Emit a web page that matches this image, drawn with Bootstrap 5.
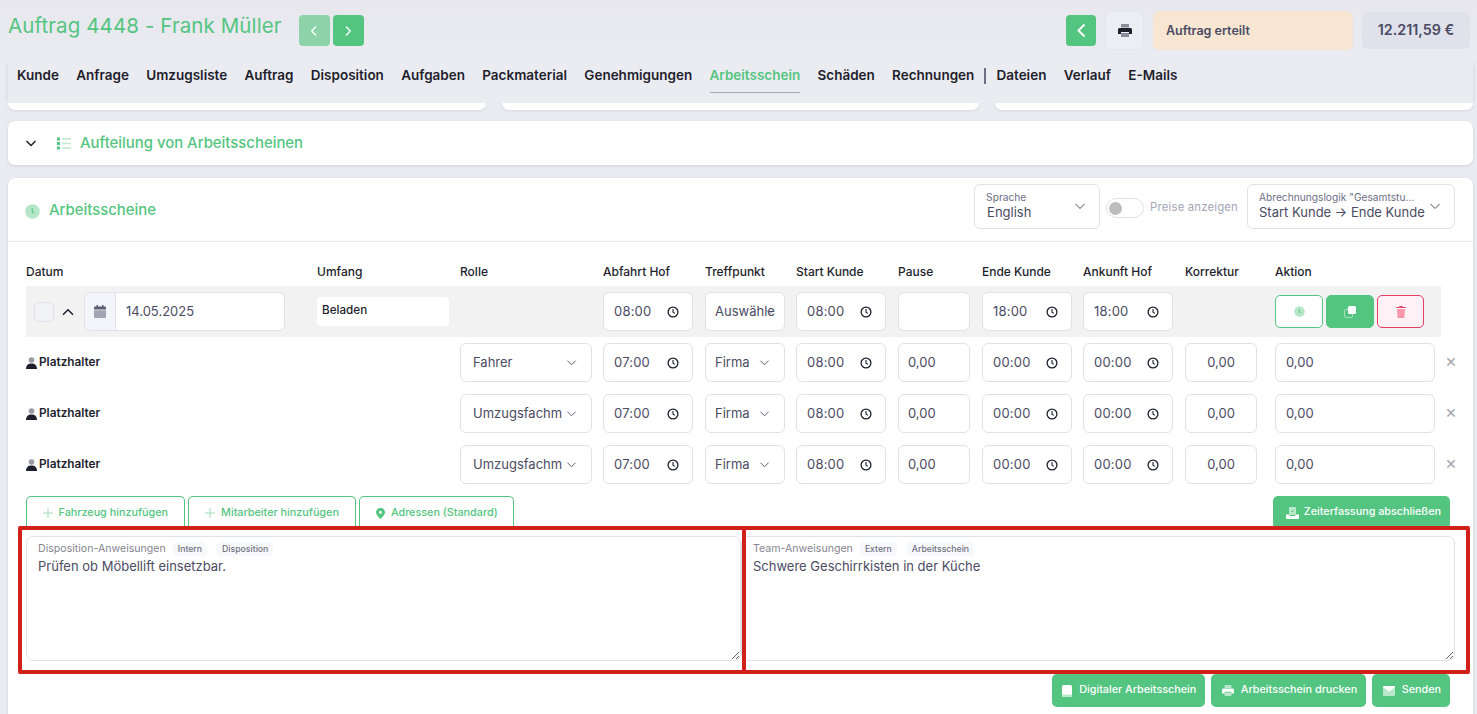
<!DOCTYPE html>
<html lang="de">
<head>
<meta charset="utf-8">
<title>Auftrag 4448</title>
<link href="https://cdn.jsdelivr.net/npm/bootstrap@5.3.0/dist/css/bootstrap.min.css" rel="stylesheet">
<style>
:root{--g:#54c581;--ink:#1e1e2d;--txt:#4b4b63;--line:#e1e1ec;}
html,body{height:714px;overflow:hidden}
body{background:#ebecf1;font-family:Inter,"Liberation Sans",sans-serif;color:var(--ink);font-size:13px}
.tm-top{height:60px;padding:11px 7px 0 8px;background:linear-gradient(#e7e7ed,#ebecf1)}
.tm-title{font-size:20.5px;font-weight:400;color:var(--g);margin:-1px 0 0;line-height:32px;letter-spacing:.1px}
.tm-pager{display:flex;gap:3px;margin:4px 0 0 17px}
.tm-sq{width:31px;height:31px;padding:0;border-radius:4px;border:0;background:var(--g);display:flex;align-items:center;justify-content:center}
.tm-sq:disabled{background:#8dd3a9;opacity:1}
.tm-sq:hover{background:var(--g)}
.tm-back{width:30px;margin:4px 9px 0 0}
.tm-print{width:39px;height:39px;padding:0;border:1px solid #e3e6ec;background:#ebeff3;border-radius:6px;display:flex;align-items:center;justify-content:center}
.tm-status{width:200px;height:39px;margin-left:9px;background:#f8e6d2;border:1px solid #f3e3d3;border-radius:6px;font-weight:600;font-size:12.5px;color:#4b4b63;display:flex;align-items:center;padding:2px 0 0 12px}
.tm-sum{width:108px;height:37px;margin:1px 0 0 9px;background:#dfe1eb;border-radius:6px;font-weight:600;font-size:14.3px;color:#4b4b63;display:flex;align-items:center;justify-content:center;padding-bottom:2px}
.tm-navbar{height:42px;margin:1px 4px 0 8px;padding:0 0 0 9px;background:#ebecf1;position:relative;box-shadow:-3px 0 4px -3px rgba(40,40,70,.15), 3px 0 4px -3px rgba(40,40,70,.15)}
.tm-navbar .nav{gap:17.280px;align-items:flex-start}
.tm-navbar .nav-link{padding:4px 0 7px;font-size:13.5px;font-weight:600;color:var(--ink);line-height:20px;border-bottom:1px solid transparent}
.tm-navbar .nav-link.active{color:var(--g);border-bottom-color:#a9a9b8}
.tm-sep{width:2px;height:16px;background:#6e6e85;margin:7px -7.200px 0}
.tm-stubs{display:flex;gap:16px;margin:0 4px 0 8px;height:7px}
.tm-stub{flex:1;background:#fff;border-radius:0 0 7px 7px;box-shadow:0 1px 3px rgba(40,40,70,.1)}
.tm-card{background:#fff;border:0;border-radius:7px;box-shadow:0 1px 3px rgba(40,40,70,.14);margin:0 4px 0 8px}
.tm-split{height:44px;margin-top:11px;display:flex;align-items:center;padding-left:17px}
.tm-split span{font-size:14.9px;font-weight:500;color:var(--g);margin-left:9px}
.tm-list{margin-left:20px}
.tm-main{margin-top:13px;height:560px;position:relative}
.tm-head{height:64px;border-bottom:1px solid #eaeaf1;display:flex;align-items:center;padding:0 18px 0 17px}
.tm-head h2{font-size:14.9px;font-weight:500;color:var(--g);margin:3px 0 0 9px}
.tm-hright{margin-left:auto;margin-bottom:3px;display:flex;align-items:center}
.tm-float{height:45px;margin-top:-4px}
.tm-float.form-floating>.form-select{height:45px;min-height:45px;padding:11px 24px 0 12px;font-size:13px;line-height:20px;color:var(--txt);border-color:var(--line);border-radius:6px;background-position:right 13px top 15px;background-size:12px;background-image:url("data:image/svg+xml,%3Csvg xmlns='http://www.w3.org/2000/svg' viewBox='0 0 12 12'%3E%3Cpath d='M1.500 4l4.500 4.500L10.500 4' fill='none' stroke='%234b4b63' stroke-width='1'/%3E%3C/svg%3E")}
.tm-float.form-floating>label{padding:6px 12px;font-size:10.2px;color:#6e6e85;transform:none!important;opacity:1!important;height:auto;border:0;white-space:nowrap;overflow:hidden;text-overflow:ellipsis}
.tm-float.form-floating>label::after{display:none!important}
.tm-lang{width:126px}
.tm-logic{width:208px}
.tm-logic.form-floating>.form-select{padding-left:11px}
.tm-switch{width:38px;height:20px;border:1px solid var(--line);border-radius:10px;position:relative;margin:0 6px;background:#fff}
.tm-switch::after{content:"";position:absolute;left:2px;top:3px;width:13px;height:13px;border-radius:50%;background:#bdbdbd}
.tm-preis{font-size:11.4px;color:#a6a6b8;margin-right:9px;letter-spacing:.15px}
.tm-body{padding:15px 0 0 18px}
.tm-grid{display:grid;grid-template-columns:291px 143px 143px 102px 91px 102px 84px 101px 102px 90px 166px 30px;align-items:center;height:51px}
.tm-thead{height:29px;font-size:12px;font-weight:500}
.tm-gray{background:#f2f2f3;grid-template-columns:291px 143px 143px 102px 91px 102px 84px 101px 102px 90px 166px;width:1415px}
.tm-f{height:39px;font-size:13px;color:var(--txt);border-color:var(--line);border-radius:6px;padding:0 9px}
.form-control.tm-f{padding:0 9px 2px 10px}
.form-control.tm-time{width:90px;letter-spacing:.2px;background-image:url("data:image/svg+xml,%3Csvg xmlns='http://www.w3.org/2000/svg' viewBox='0 0 12 12'%3E%3Ccircle cx='6' cy='6' r='4.900' fill='none' stroke='%231e1e2d' stroke-width='1.300'/%3E%3Cpath d='M6 3v3.200l2 1.200' fill='none' stroke='%231e1e2d' stroke-width='1.100'/%3E%3C/svg%3E");background-repeat:no-repeat;background-position:right 13px center;background-size:12px}
.tm-p72{width:72px}
.form-control.tm-p72{padding-left:9px}
.form-control.tm-c{text-align:center;padding-left:9px}
.tm-wide{width:160px}
.tm-sel{padding:0 20px 0 12px;background-position:right 14px center;background-size:11px;background-image:url("data:image/svg+xml,%3Csvg xmlns='http://www.w3.org/2000/svg' viewBox='0 0 12 12'%3E%3Cpath d='M1.500 4l4.500 4.500L10.500 4' fill='none' stroke='%234b4b63' stroke-width='1'/%3E%3C/svg%3E")}
.tm-role{width:132px;padding-right:29px}
.tm-meet{width:80px;padding-left:9px;padding-right:24px}
.form-select.tm-pick{padding-right:9px;background-position:right 10px center;background-size:8px}
.tm-name{display:flex;align-items:center;font-size:11.8px;font-weight:600;gap:2px;padding-top:1px}
.tm-date{display:flex;align-items:center}
.tm-check{width:20px;height:20px;margin:0 0 0 8px;border:1px solid var(--line);border-radius:5px;background:#f2f3f6}
.tm-up{margin-left:8px}
.tm-group{width:201px;margin-left:10px;flex-wrap:nowrap}
.tm-group .input-group-text{width:32px;height:39px;padding:0;justify-content:center;background:#f2f5f9;border-color:var(--line);border-radius:6px 0 0 6px}
.tm-group .form-control{height:39px;font-size:13px;color:var(--txt);border-color:var(--line);border-radius:0 6px 6px 0;padding:0 0 2px 10px}
.tm-scope{width:132px;height:29px;font-size:11.7px;font-weight:500;color:var(--ink);background:#fff;border:0;border-radius:4px;padding:0 5px 3px;margin-top:-1px}
.tm-acts{display:flex;gap:3px}
.tm-act{width:48px;height:33px;padding:0;border-radius:5px;display:flex;align-items:center;justify-content:center}
.tm-act-w{background:#fff;border:1px solid var(--g)}
.tm-act-g{background:var(--g);border:1px solid var(--g)}
.tm-act-r{width:47px;background:#fff1f5;border:1px solid #e83e62}
.tm-x{color:#a8a8ad;font-size:18px;line-height:1;text-align:left;padding:0 0 0 4px;margin-top:-3px;background:none;border:0;width:30px}
.tm-tools{display:flex;justify-content:space-between;width:1424px;margin-top:6px}
.tm-addrow{display:flex;gap:3px}
.tm-btn{height:33px;padding:0 15.500px;font-size:10.8px;font-weight:500;border-radius:5px 5px 0 0;display:inline-flex;align-items:center;gap:6px;white-space:nowrap}
.tm-addrow .tm-btn+.tm-btn{padding:0 16.500px}
.tm-addrow .tm-btn+.tm-btn+.tm-btn{padding:0 15.500px}
.tm-btn-o{background:#fff;color:var(--g);border:1px solid var(--g);border-bottom:0}
.tm-btn-o:hover{background:#fff;color:var(--g);border-color:var(--g)}
.tm-btn-s{background:var(--g);color:#fff;border:0;border-radius:5px}
.tm-btn-s:hover{background:var(--g);color:#fff}
.tm-done{padding:0 9px 0 13px;gap:5px}
.tm-notes{display:grid;grid-template-columns:715px 714px;margin-top:7px;width:1429px}
.tm-note{position:relative}
.tm-note textarea{height:125px;display:block;width:100%;border:1px solid var(--line);border-radius:7px;padding:21px 11px 0;font-size:13px;line-height:17px;color:var(--txt)}
.tm-lab{position:absolute;left:12px;top:6px;display:flex;align-items:center;font-size:10.6px;color:#85858f;line-height:14px}
.tm-tag{font-size:8.700px;font-weight:500;background:#f7f8fb;color:#70707f;border-radius:4px;padding:0 5px;line-height:14px;margin-left:7px;height:14px}
.tm-tag+.tm-tag{margin-left:10px}
.tm-foot{display:flex;justify-content:flex-end;gap:6px;width:1424px;margin-top:13px}
.tm-foot .tm-btn{padding:0 9px 0 10.500px;gap:7px}
.tm-red{position:absolute;border:4px solid #d2201a;border-radius:2px;top:526px;height:148px;pointer-events:none}
.tm-red1{left:18px;width:728px}
.tm-red2{left:742px;width:728px}
</style>
</head>
<body>
<div class="tm-top d-flex align-items-start justify-content-between">
  <div class="d-flex align-items-start">
    <h1 class="tm-title">Auftrag 4448 - Frank Müller</h1>
    <div class="tm-pager">
      <button class="btn tm-sq" disabled aria-label="Zurück"><svg width="10" height="12" viewBox="0 0 10 12"><path d="M7 1.500 2.800 6 7 10.500" fill="none" stroke="#fff" stroke-width="1.300"/></svg></button>
      <button class="btn tm-sq" aria-label="Weiter"><svg width="10" height="12" viewBox="0 0 10 12"><path d="M3 1.500 7.200 6 3 10.500" fill="none" stroke="#fff" stroke-width="1.300"/></svg></button>
    </div>
  </div>
  <div class="d-flex align-items-start">
    <button class="btn tm-sq tm-back" aria-label="Zurück"><svg width="11" height="15" viewBox="0 0 11 15"><path d="M8.500 1.500 2.500 7.500l6 6" fill="none" stroke="#fff" stroke-width="1.900"/></svg></button>
    <button class="btn tm-print" aria-label="Drucken"><svg width="14" height="13" viewBox="0 0 14 13"><path d="M3 0h8v3.500H3zM3 9h8v4H3z" fill="#8b8b99"/><path d="M1.500 4h11A1.500 1.500 0 0 1 14 5.500V10h-3V8H3v2H0V5.500A1.500 1.500 0 0 1 1.500 4z" fill="#1e1e2d"/></svg></button>
    <div class="tm-status">Auftrag erteilt</div>
    <div class="tm-sum">12.211,59 €</div>
  </div>
</div>
<nav class="tm-navbar">
  <ul class="nav flex-nowrap">
    <li class="nav-item"><a class="nav-link" href="#">Kunde</a></li>
    <li class="nav-item"><a class="nav-link" href="#">Anfrage</a></li>
    <li class="nav-item"><a class="nav-link" href="#">Umzugsliste</a></li>
    <li class="nav-item"><a class="nav-link" href="#">Auftrag</a></li>
    <li class="nav-item"><a class="nav-link" href="#">Disposition</a></li>
    <li class="nav-item"><a class="nav-link" href="#">Aufgaben</a></li>
    <li class="nav-item"><a class="nav-link" href="#">Packmaterial</a></li>
    <li class="nav-item"><a class="nav-link" href="#">Genehmigungen</a></li>
    <li class="nav-item"><a class="nav-link active" href="#">Arbeitsschein</a></li>
    <li class="nav-item"><a class="nav-link" href="#">Schäden</a></li>
    <li class="nav-item"><a class="nav-link" href="#">Rechnungen</a></li>
    <li class="tm-sep"></li>
    <li class="nav-item"><a class="nav-link" href="#">Dateien</a></li>
    <li class="nav-item"><a class="nav-link" href="#">Verlauf</a></li>
    <li class="nav-item"><a class="nav-link" href="#">E-Mails</a></li>
  </ul>
</nav>
<div class="tm-stubs"><div class="tm-stub"></div><div class="tm-stub"></div><div class="tm-stub"></div></div>
<section class="card tm-card tm-split flex-row">
  <svg width="12" height="12" viewBox="0 0 12 12"><path d="M1.500 4l4.500 4.500L10.500 4" fill="none" stroke="#1e1e2d" stroke-width="1.500"/></svg>
  <svg class="tm-list" width="14" height="13" viewBox="0 0 14 13"><path d="M0 .5h3v3H0zM0 5h3v3H0zM0 9.500h3v3H0z" fill="#54c581"/><path d="M5 1.200h9v1.600H5zM5 5.700h9v1.600H5zM5 10.200h9v1.600H5z" fill="#bce8cd"/></svg>
  <span>Aufteilung von Arbeitsscheinen</span>
</section>
<section class="card tm-card tm-main">
  <div class="tm-head">
    <svg width="15" height="15" viewBox="0 0 15 15" class="mt-1"><circle cx="7.500" cy="7.500" r="7.300" fill="#b5e6c8"/><path d="M7.200 4v3.800l2 1.500" fill="none" stroke="#54c581" stroke-width="1.100"/></svg>
    <h2>Arbeitsscheine</h2>
    <div class="tm-hright">
      <div class="form-floating tm-float tm-lang">
        <select class="form-select" id="tm-lang"><option>English</option></select>
        <label for="tm-lang">Sprache</label>
      </div>
      <div class="tm-switch"></div>
      <span class="tm-preis">Preise anzeigen</span>
      <div class="form-floating tm-float tm-logic">
        <select class="form-select" id="tm-logic"><option>Start Kunde → Ende Kunde</option></select>
        <label for="tm-logic">Abrechnungslogik "Gesamtstu...</label>
      </div>
    </div>
  </div>
  <div class="tm-body">
    <div class="tm-grid tm-thead">
      <div>Datum</div><div>Umfang</div><div>Rolle</div><div>Abfahrt Hof</div><div>Treffpunkt</div><div>Start Kunde</div><div>Pause</div><div>Ende Kunde</div><div>Ankunft Hof</div><div>Korrektur</div><div>Aktion</div><div></div>
    </div>
    <div class="tm-grid tm-gray">
      <div class="tm-date">
        <div class="tm-check"></div>
        <svg class="tm-up" width="12" height="8" viewBox="0 0 12 8"><path d="M1 6.800 6 1.800l5 5" fill="none" stroke="#1e1e2d" stroke-width="1.500"/></svg>
        <div class="input-group tm-group">
          <span class="input-group-text"><svg width="12" height="13" viewBox="0 0 12 13"><path d="M2.500 0h1.500v1.500h4V0h1.500v1.500H11A1 1 0 0 1 12 2.500V4.500H0V2.500A1 1 0 0 1 1 1.500h1.500z" fill="#5e5e70"/><path d="M0 5.200h12V12a1 1 0 0 1-1 1H1a1 1 0 0 1-1-1z" fill="#a4a4b2"/></svg></span>
          <input class="form-control" value="14.05.2025" aria-label="Datum">
        </div>
      </div>
      <div><input class="tm-scope" value="Beladen" aria-label="Umfang"></div>
      <div></div>
      <div><input class="form-control tm-f tm-time" value="08:00" aria-label="Abfahrt Hof"></div>
      <div><select class="form-select tm-f tm-sel tm-meet tm-pick" aria-label="Treffpunkt"><option>Auswählen</option></select></div>
      <div><input class="form-control tm-f tm-time" value="08:00" aria-label="Start Kunde"></div>
      <div><input class="form-control tm-f tm-p72" value="" aria-label="Pause"></div>
      <div><input class="form-control tm-f tm-time" value="18:00" aria-label="Ende Kunde"></div>
      <div><input class="form-control tm-f tm-time" value="18:00" aria-label="Ankunft Hof"></div>
      <div></div>
      <div class="tm-acts">
        <button class="btn tm-act tm-act-w" aria-label="Zeit"><svg width="11" height="11" viewBox="0 0 11 11"><circle cx="5.500" cy="5.500" r="5.300" fill="#b5e6c8"/><path d="M5.300 3v2.800l1.500 1" fill="none" stroke="#54c581"/></svg></button>
        <button class="btn tm-act tm-act-g" aria-label="Kopieren"><svg width="12" height="12" viewBox="0 0 12 12"><rect x="0.500" y="3.500" width="8" height="8" rx="1.500" fill="none" stroke="#a6e0bd"/><rect x="4" y="0" width="8" height="8" rx="1.500" fill="#fff"/></svg></button>
        <button class="btn tm-act tm-act-r" aria-label="Löschen"><svg width="10" height="12" viewBox="0 0 10 12"><path d="M1 3h8l-.6 9H1.600z" fill="#f799ab"/><path d="M3.500 0h3l.5 1h3v1H0V1h3z" fill="#ea4b6d"/></svg></button>
      </div>
    </div>
    <div class="tm-grid">
      <div class="tm-name"><svg width="11" height="12" viewBox="0 0 11 12"><circle cx="5.500" cy="3" r="2.800" fill="#9a9aa4"/><path d="M0 12c0-3.500 2-5.500 5.500-5.500S11 8.500 11 12z" fill="#1e1e2d"/></svg>Platzhalter</div><div></div>
      <div><select class="form-select tm-f tm-sel tm-role" aria-label="Rolle"><option>Fahrer</option></select></div>
      <div><input class="form-control tm-f tm-time" value="07:00" aria-label="Abfahrt Hof"></div>
      <div><select class="form-select tm-f tm-sel tm-meet" aria-label="Treffpunkt"><option>Firma</option></select></div>
      <div><input class="form-control tm-f tm-time" value="08:00" aria-label="Start Kunde"></div>
      <div><input class="form-control tm-f tm-p72" value="0,00" aria-label="Pause"></div>
      <div><input class="form-control tm-f tm-time" value="00:00" aria-label="Ende Kunde"></div>
      <div><input class="form-control tm-f tm-time" value="00:00" aria-label="Ankunft Hof"></div>
      <div><input class="form-control tm-f tm-p72 tm-c" value="0,00" aria-label="Korrektur"></div>
      <div><input class="form-control tm-f tm-wide" value="0,00" aria-label="Aktion"></div>
      <button class="tm-x" aria-label="Entfernen">×</button>
    </div>
    <div class="tm-grid">
      <div class="tm-name"><svg width="11" height="12" viewBox="0 0 11 12"><circle cx="5.500" cy="3" r="2.800" fill="#9a9aa4"/><path d="M0 12c0-3.500 2-5.500 5.500-5.500S11 8.500 11 12z" fill="#1e1e2d"/></svg>Platzhalter</div><div></div>
      <div><select class="form-select tm-f tm-sel tm-role" aria-label="Rolle"><option>Umzugsfachmann</option></select></div>
      <div><input class="form-control tm-f tm-time" value="07:00" aria-label="Abfahrt Hof"></div>
      <div><select class="form-select tm-f tm-sel tm-meet" aria-label="Treffpunkt"><option>Firma</option></select></div>
      <div><input class="form-control tm-f tm-time" value="08:00" aria-label="Start Kunde"></div>
      <div><input class="form-control tm-f tm-p72" value="0,00" aria-label="Pause"></div>
      <div><input class="form-control tm-f tm-time" value="00:00" aria-label="Ende Kunde"></div>
      <div><input class="form-control tm-f tm-time" value="00:00" aria-label="Ankunft Hof"></div>
      <div><input class="form-control tm-f tm-p72 tm-c" value="0,00" aria-label="Korrektur"></div>
      <div><input class="form-control tm-f tm-wide" value="0,00" aria-label="Aktion"></div>
      <button class="tm-x" aria-label="Entfernen">×</button>
    </div>
    <div class="tm-grid">
      <div class="tm-name"><svg width="11" height="12" viewBox="0 0 11 12"><circle cx="5.500" cy="3" r="2.800" fill="#9a9aa4"/><path d="M0 12c0-3.500 2-5.500 5.500-5.500S11 8.500 11 12z" fill="#1e1e2d"/></svg>Platzhalter</div><div></div>
      <div><select class="form-select tm-f tm-sel tm-role" aria-label="Rolle"><option>Umzugsfachmann</option></select></div>
      <div><input class="form-control tm-f tm-time" value="07:00" aria-label="Abfahrt Hof"></div>
      <div><select class="form-select tm-f tm-sel tm-meet" aria-label="Treffpunkt"><option>Firma</option></select></div>
      <div><input class="form-control tm-f tm-time" value="08:00" aria-label="Start Kunde"></div>
      <div><input class="form-control tm-f tm-p72" value="0,00" aria-label="Pause"></div>
      <div><input class="form-control tm-f tm-time" value="00:00" aria-label="Ende Kunde"></div>
      <div><input class="form-control tm-f tm-time" value="00:00" aria-label="Ankunft Hof"></div>
      <div><input class="form-control tm-f tm-p72 tm-c" value="0,00" aria-label="Korrektur"></div>
      <div><input class="form-control tm-f tm-wide" value="0,00" aria-label="Aktion"></div>
      <button class="tm-x" aria-label="Entfernen">×</button>
    </div>
    <div class="tm-tools">
      <div class="tm-addrow">
        <button class="btn tm-btn tm-btn-o"><svg width="10" height="10" viewBox="0 0 10 10"><path d="M5 0v10M0 5h10" stroke="#a6e0bd" stroke-width="1.100"/></svg>Fahrzeug hinzufügen</button>
        <button class="btn tm-btn tm-btn-o"><svg width="10" height="10" viewBox="0 0 10 10"><path d="M5 0v10M0 5h10" stroke="#a6e0bd" stroke-width="1.100"/></svg>Mitarbeiter hinzufügen</button>
        <button class="btn tm-btn tm-btn-o"><svg width="9" height="11" viewBox="0 0 9 11"><path fill-rule="evenodd" d="M4.500 0A4.300 4.300 0 0 1 9 4.300C9 7 5.500 10.200 4.500 11 3.500 10.200 0 7 0 4.300A4.300 4.300 0 0 1 4.500 0zm0 2.800a1.500 1.500 0 1 0 0 3 1.500 1.500 0 0 0 0-3z" fill="#54c581"/></svg>Adressen (Standard)</button>
      </div>
      <button class="btn tm-btn tm-btn-s tm-done"><svg width="13" height="12" viewBox="0 0 13 12"><rect x="3" y="0" width="7" height="8" rx="1" fill="#b9e8cb"/><path d="M4.800 3.800 6 5l2.200-2.300" fill="none" stroke="#54c581" stroke-width=".9"/><path d="M0 7.500h3l1 1.500h5l1-1.500h3V11a1 1 0 0 1-1 1H1a1 1 0 0 1-1-1z" fill="#fff"/></svg>Zeiterfassung abschließen</button>
    </div>
    <div class="tm-notes">
      <div class="tm-note">
        <textarea aria-label="Disposition-Anweisungen">Prüfen ob Möbellift einsetzbar.</textarea>
        <div class="tm-lab">Disposition-Anweisungen <span class="tm-tag">Intern</span><span class="tm-tag">Disposition</span></div>
      </div>
      <div class="tm-note">
        <textarea aria-label="Team-Anweisungen">Schwere Geschirrkisten in der Küche</textarea>
        <div class="tm-lab">Team-Anweisungen <span class="tm-tag">Extern</span><span class="tm-tag">Arbeitsschein</span></div>
      </div>
    </div>
    <div class="tm-foot">
      <button class="btn tm-btn tm-btn-s"><svg width="10" height="12" viewBox="0 0 10 12"><rect width="10" height="12" rx="1.500" fill="#fff"/><path d="M0 9.500h10V10.500A1.500 1.500 0 0 1 8.500 12h-7A1.500 1.500 0 0 1 0 10.500z" fill="#b9e8cb"/></svg>Digitaler Arbeitsschein</button>
      <button class="btn tm-btn tm-btn-s"><svg width="12" height="11" viewBox="0 0 14 13"><path d="M3 0h8v3.500H3zM3 9h8v4H3z" fill="#b9e8cb"/><path d="M1.500 4h11A1.500 1.500 0 0 1 14 5.500V10h-3V8H3v2H0V5.500A1.500 1.500 0 0 1 1.500 4z" fill="#fff"/></svg>Arbeitsschein drucken</button>
      <button class="btn tm-btn tm-btn-s"><svg width="12" height="10" viewBox="0 0 12 10"><rect width="12" height="10" rx="1.200" fill="#b9e8cb"/><path d="M0 1.200A1.200 1.200 0 0 1 1.200 0h9.600A1.200 1.200 0 0 1 12 1.200L6 5.500z" fill="#fff"/></svg>Senden</button>
    </div>
  </div>
</section>
<div class="tm-red tm-red1"></div>
<div class="tm-red tm-red2"></div>
</body>
</html>
